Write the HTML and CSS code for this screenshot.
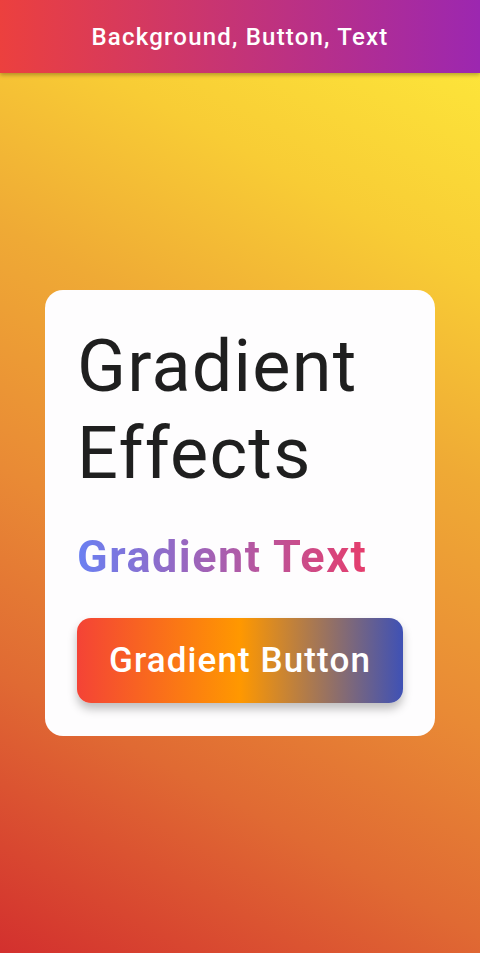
FILE: index.html
```html
<!DOCTYPE html>
<html lang="en">
<head>
<meta charset="utf-8">
<title>Background, Button, Text</title>
<link rel="stylesheet" href="styles.css">
</head>
<body>
<div class="screen">
  <header class="appbar">
    <h1 class="appbar-title">Background, Button, Text</h1>
  </header>
  <main class="content">
    <section class="card">
      <h2 class="card-title">Gradient Effects</h2>
      <div class="gradient-text-row"><span class="gradient-text">Gradient Text</span></div>
      <button class="gradient-button" type="button">Gradient Button</button>
    </section>
  </main>
</div>
</body>
</html>
```

FILE: styles.css
```css
* { box-sizing: border-box; }
html, body {
  margin: 0;
  padding: 0;
  width: 480px;
  height: 953px;
  overflow: hidden;
  font-family: Roboto, "Noto Sans", sans-serif;
}
.screen {
  width: 480px;
  height: 953px;
  display: flex;
  flex-direction: column;
  background: linear-gradient(208.6deg,
    #FFEB3B 0%,
    #FDE63A 5%,
    #F8CC35 23%,
    #EFAA35 40%,
    #E98A35 60%,
    #E06A33 77%,
    #D3302E 100%);
}
.appbar {
  height: 73px;
  flex: 0 0 73px;
  display: flex;
  align-items: center;
  justify-content: center;
  background: linear-gradient(90deg, #EC403E 0%, #9C27B0 100%);
  box-shadow: 0 2px 4px rgba(0, 0, 0, 0.28);
  position: relative;
  z-index: 1;
}
.appbar-title {
  margin: 0;
  color: #ffffff;
  font-size: 24px;
  font-weight: 500;
  letter-spacing: 1.2px;
  line-height: 1;
  padding-top: 1px;
}
.content {
  flex: 1;
  display: flex;
  align-items: center;
  justify-content: center;
}
.card {
  width: 390px;
  background: #FEFDFE;
  border-radius: 18px;
  padding: 32px 32px 33px;
  display: flex;
  flex-direction: column;
  align-items: stretch;
}
.card-title {
  margin: 0;
  font-size: 72px;
  font-weight: 400;
  letter-spacing: 1.2px;
  line-height: 86.4px;
  color: #1F1F1F;
  padding-top: 2px;
}
.gradient-text-row {
  margin-top: 34px;
}
.gradient-text {
  display: inline-block;
  font-size: 45px;
  font-weight: 700;
  letter-spacing: 1.5px;
  line-height: 52.7px;
  background: linear-gradient(90deg, #6A80F2 0%, #E63D6C 100%);
  -webkit-background-clip: text;
  background-clip: text;
  color: transparent;
  -webkit-text-fill-color: transparent;
}
.gradient-button {
  margin-top: 34px;
  height: 85px;
  border: none;
  border-radius: 14px;
  background: linear-gradient(90deg, #F44336 0%, #FF9800 50%, #3F51B5 100%);
  color: #ffffff;
  font-family: Roboto, "Noto Sans", sans-serif;
  font-size: 35px;
  font-weight: 500;
  letter-spacing: 1.1px;
  box-shadow: 0 6px 10px rgba(0, 0, 0, 0.25);
  padding: 0;
}
```
